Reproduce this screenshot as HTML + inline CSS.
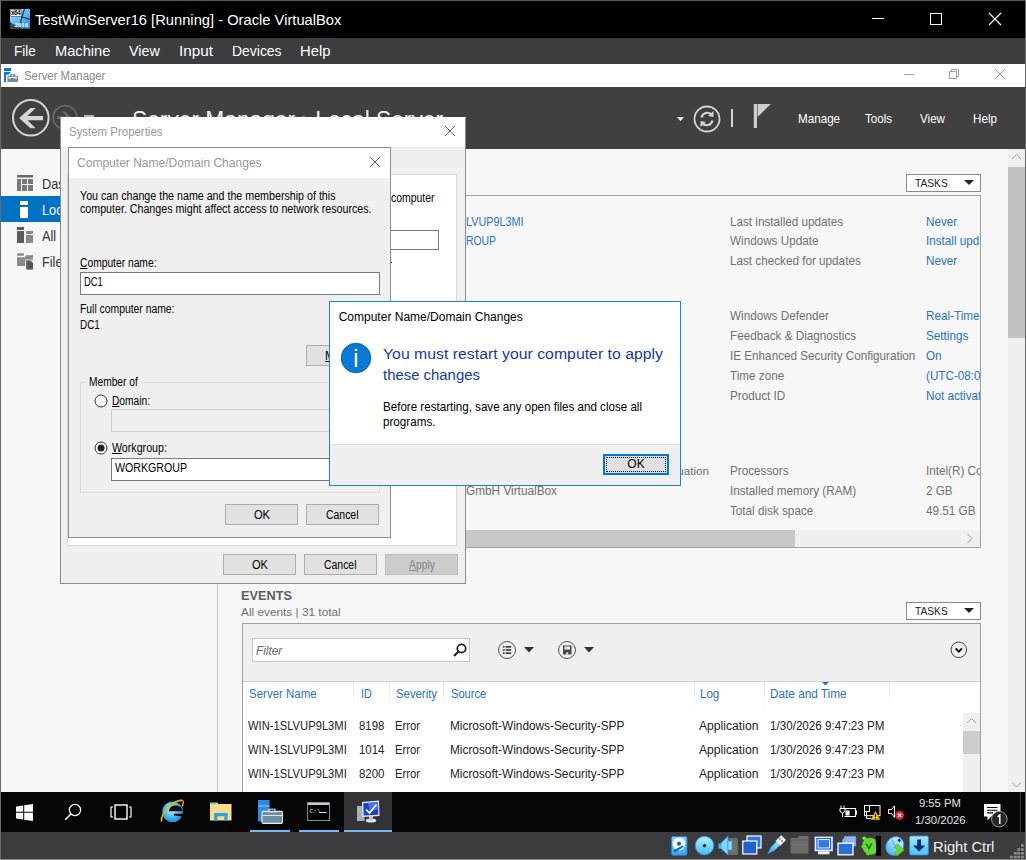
<!DOCTYPE html>
<html><head><meta charset="utf-8"><style>
html,body{margin:0;padding:0;width:1026px;height:860px;overflow:hidden;background:#3c3c3c}
body{position:relative;font-family:"Liberation Sans",sans-serif}
body>div{position:absolute}
.t{position:absolute;white-space:nowrap;font-family:"Liberation Sans",sans-serif}
svg{overflow:visible}
</style></head><body>
<div style="left:0px;top:0px;width:1026px;height:860px;background:#3c3c3c"></div>
<div style="left:0px;top:0px;width:1026px;height:1px;background:#5a5a5a"></div>
<div style="left:0px;top:0px;width:1px;height:860px;background:#6a6a6a"></div>
<div style="left:1025px;top:0px;width:1px;height:860px;background:#6a6a6a"></div>
<div style="left:1px;top:1px;width:1024px;height:37px;background:#000"></div>
<svg style="position:absolute;left:10px;top:9px;" width="20" height="20" viewBox="0 0 20 20"><defs><linearGradient id="g1" x1="0" y1="0" x2="1" y2="1"><stop offset="0" stop-color="#bfe8fb"/><stop offset="0.5" stop-color="#5bbcf4"/><stop offset="1" stop-color="#1f86e8"/></linearGradient></defs>
<rect width="20" height="20" fill="url(#g1)"/><polygon points="0,13 0,20 11,20" fill="#3e4654"/><polygon points="0,18 0,20 20,20 20,19" fill="#3e4654" opacity="0.6"/>
<path d="M14.5,0 Q11,9 9.5,20" stroke="#1d2d44" stroke-width="1.1" fill="none"/><line x1="11" y1="7.5" x2="20" y2="10.5" stroke="#1d2d44" stroke-width="1.1"/>
<rect x="0.3" y="0.5" width="11" height="7" rx="1" fill="#f2efe6" stroke="#444" stroke-width="0.6"/><text x="1" y="6.3" font-size="6.4" font-family="Liberation Sans" font-weight="bold" fill="#1a1a1a" textLength="9.6">x64</text>
<text x="4.6" y="17.6" font-size="6.6" font-family="Liberation Serif" font-weight="bold" fill="#fff" textLength="13.6">2016</text></svg>
<div class="t" style="left:34.9px;top:11.88px;font-size:15.5px;line-height:15.5px;color:#fff;;transform:scaleX(0.9492);transform-origin:0 0;">TestWinServer16 [Running] - Oracle VirtualBox</div>
<div style="left:872px;top:18px;width:12px;height:1px;background:#fff"></div>
<div style="left:930px;top:13px;width:12px;height:12px;border:1px solid #fff;box-sizing:border-box"></div>
<svg style="position:absolute;left:988px;top:12px;" width="14" height="14" viewBox="0 0 14 14"><path d="M1,1 L13,13 M13,1 L1,13" stroke="#fff" stroke-width="1.2"/></svg>
<div style="left:1px;top:38px;width:1024px;height:26px;background:#3c3d3f"></div>
<div class="t" style="left:14.1px;top:43.30px;font-size:15px;line-height:15px;color:#fff;;transform:scaleX(0.9019);transform-origin:0 0;">File</div>
<div class="t" style="left:54.7px;top:43.30px;font-size:15px;line-height:15px;color:#fff;;transform:scaleX(0.9753);transform-origin:0 0;">Machine</div>
<div class="t" style="left:129.2px;top:43.30px;font-size:15px;line-height:15px;color:#fff;;transform:scaleX(0.9550);transform-origin:0 0;">View</div>
<div class="t" style="left:178.9px;top:43.30px;font-size:15px;line-height:15px;color:#fff;;transform:scaleX(1.0217);transform-origin:0 0;">Input</div>
<div class="t" style="left:232px;top:43.30px;font-size:15px;line-height:15px;color:#fff;;transform:scaleX(0.9295);transform-origin:0 0;">Devices</div>
<div class="t" style="left:299.9px;top:43.30px;font-size:15px;line-height:15px;color:#fff;;transform:scaleX(0.9884);transform-origin:0 0;">Help</div>
<div style="left:1px;top:64px;width:1024px;height:23px;background:#fff"></div>
<svg style="position:absolute;left:4px;top:68px;" width="15" height="15" viewBox="0 0 15 15"><rect x="0" y="0" width="7" height="3" fill="#0a78d4"/><path d="M0,4 H7 L4.2,6.8 H2 V14 H0 Z" fill="#0a78d4"/><rect x="3.4" y="7.8" width="10.6" height="6.2" fill="#6e8ca2"/><rect x="6.6" y="6.3" width="4.2" height="2" fill="none" stroke="#6e8ca2" stroke-width="1"/><path d="M4.2,9 H13.2 L12.4,10.8 H11.4 L11,9.9 H6.4 L6,10.8 H5 Z" fill="#fff"/></svg>
<div class="t" style="left:24.4px;top:70.02px;font-size:12.5px;line-height:12.5px;color:#8a8a8a;;transform:scaleX(0.9082);transform-origin:0 0;">Server Manager</div>
<div style="left:904px;top:74px;width:10px;height:1px;background:#a0a0a0"></div>
<svg style="position:absolute;left:948px;top:68px;" width="12" height="12" viewBox="0 0 12 12"><rect x="1.5" y="3.5" width="7" height="7" fill="none" stroke="#a0a0a0"/><path d="M3.5,3.5 V1.5 H10.5 V8.5 H8.5" fill="none" stroke="#a0a0a0"/></svg>
<svg style="position:absolute;left:995px;top:69px;" width="11" height="11" viewBox="0 0 11 11"><path d="M0,0 L10,10 M10,0 L0,10" stroke="#a0a0a0" stroke-width="1"/></svg>
<div style="left:1px;top:87px;width:1024px;height:62px;background:#404040"></div>
<svg style="position:absolute;left:11px;top:98px;" width="40" height="40" viewBox="0 0 40 40"><circle cx="19.8" cy="19.8" r="17.8" fill="none" stroke="#d6d6d6" stroke-width="2"/><polygon points="8.1,20.1 19.5,9.9 24.7,9.9 16.4,17.9 32,17.9 32,22.3 16.4,22.3 24.7,30.2 19.5,30.2" fill="#d6d6d6"/></svg>
<svg style="position:absolute;left:51px;top:104px;" width="28" height="28" viewBox="0 0 28 28"><circle cx="14" cy="13.5" r="11.8" fill="none" stroke="#6a6a6a" stroke-width="1.6"/><polygon points="21,13.7 14,7.5 10.5,7.5 15.5,12.2 6,12.2 6,15.2 15.5,15.2 10.5,19.9 14,19.9" fill="#6a6a6a"/></svg>
<div style="left:84px;top:115px;width:10px;height:2px;background:#b8b8b8"></div>
<div class="t" style="left:132px;top:108.53px;font-size:23px;line-height:23px;color:#f0f0f0;;transform:scaleX(0.9890);transform-origin:0 0;">Server Manager &#8250; Local Server</div>
<svg style="position:absolute;left:676px;top:116.5px;" width="10" height="6" viewBox="0 0 10 6"><polygon points="1,0 8,0 4.5,4.2" fill="#f0f0f0"/></svg>
<svg style="position:absolute;left:693px;top:105px;" width="28" height="28" viewBox="0 0 28 28"><circle cx="14" cy="14" r="12.5" fill="none" stroke="#d4d4d4" stroke-width="1.8"/><path d="M8.5,12.5 A6,6 0 0 1 19,10 M19.5,15.5 A6,6 0 0 1 9,18" fill="none" stroke="#d4d4d4" stroke-width="2.2"/><polygon points="20.5,6 20.5,12 15,11" fill="#d4d4d4"/><polygon points="7.5,22 7.5,16 13,17" fill="#d4d4d4"/></svg>
<div style="left:731px;top:109px;width:2px;height:18px;background:#d4d4d4"></div>
<svg style="position:absolute;left:753px;top:103px;" width="19" height="26" viewBox="0 0 19 26"><rect x="0.8" y="1" width="3.2" height="24" fill="#cfcfcf"/><polygon points="4.6,1 17.8,1 4.6,14" fill="#cfcfcf"/></svg>
<div class="t" style="left:797.5px;top:112.96px;font-size:12.8px;line-height:12.8px;color:#fff;;transform:scaleX(0.9100);transform-origin:0 0;">Manage</div>
<div class="t" style="left:865px;top:112.96px;font-size:12.8px;line-height:12.8px;color:#fff;;transform:scaleX(0.9100);transform-origin:0 0;">Tools</div>
<div class="t" style="left:919.6px;top:112.96px;font-size:12.8px;line-height:12.8px;color:#fff;;transform:scaleX(0.9100);transform-origin:0 0;">View</div>
<div class="t" style="left:973px;top:112.96px;font-size:12.8px;line-height:12.8px;color:#fff;;transform:scaleX(0.9100);transform-origin:0 0;">Help</div>
<div style="left:1px;top:149px;width:216px;height:643px;background:#f7f7f7"></div>
<div style="left:217px;top:149px;width:1px;height:643px;background:#c8c8c8"></div>
<div style="left:1px;top:196px;width:216px;height:26px;background:#0072c6"></div>
<svg style="position:absolute;left:17px;top:175px;" width="16" height="16" viewBox="0 0 16 16"><rect x="0" y="0" width="16" height="2.5" fill="#6a6a6a"/><rect x="0" y="4" width="4" height="12" fill="#7a7a7a"/><rect x="5" y="4" width="5" height="5" fill="#7a7a7a"/><rect x="11" y="4" width="5" height="5" fill="#7a7a7a"/><rect x="5" y="10" width="5" height="6" fill="#7a7a7a"/><rect x="11" y="10" width="5" height="6" fill="#7a7a7a"/></svg>
<div class="t" style="left:41.5px;top:177.15px;font-size:14px;line-height:14px;color:#333;;transform:scaleX(0.9100);transform-origin:0 0;">Dashboard</div>
<svg style="position:absolute;left:20px;top:201px;" width="9" height="17" viewBox="0 0 9 17"><rect x="0" y="0" width="8" height="4" fill="#fff"/><rect x="0" y="6" width="8" height="11" fill="#fff"/></svg>
<div class="t" style="left:41.5px;top:203.15px;font-size:14px;line-height:14px;color:#fff;;transform:scaleX(0.9100);transform-origin:0 0;">Local Server</div>
<svg style="position:absolute;left:17px;top:227px;" width="16" height="17" viewBox="0 0 16 17"><rect x="0" y="0" width="7" height="3" fill="#5a5a5a"/><rect x="0" y="4" width="7" height="12" fill="#5a5a5a"/><rect x="9" y="4" width="7" height="3" fill="#888"/><rect x="9" y="8" width="7" height="8" fill="#888"/></svg>
<div class="t" style="left:41.5px;top:229.15px;font-size:14px;line-height:14px;color:#333;;transform:scaleX(0.9100);transform-origin:0 0;">All Servers</div>
<svg style="position:absolute;left:17px;top:253px;" width="17" height="18" viewBox="0 0 17 18"><rect x="0" y="0.2" width="7" height="2.5" rx="0.8" fill="#8a8a8a"/><polygon points="0,4.2 7.8,4.2 9,2.3 16,2.3 16,7.8 8.6,7.8 8.6,13 0,13" fill="#8a8a8a"/><rect x="8.4" y="6.6" width="8.4" height="10.6" fill="#f7f7f7"/><rect x="9.2" y="7.4" width="6.8" height="9.2" fill="#555"/><polygon points="13.4,7.4 16,7.4 16,10" fill="#f7f7f7"/></svg>
<div class="t" style="left:41.5px;top:255.15px;font-size:14px;line-height:14px;color:#333;;transform:scaleX(0.9100);transform-origin:0 0;">File and Storage Services</div>
<div style="left:218px;top:149px;width:790px;height:643px;background:#f7f7f7"></div>
<div style="left:1008px;top:149px;width:17px;height:643px;background:#f0f0f0"></div>
<div style="left:1008px;top:167px;width:17px;height:171px;background:#c2c2c2"></div>
<svg style="position:absolute;left:1011px;top:153px;" width="11" height="8" viewBox="0 0 11 8"><path d="M1,6 L5.5,1.5 L10,6" fill="none" stroke="#a0a0a0" stroke-width="1"/></svg>
<svg style="position:absolute;left:1011px;top:781px;" width="11" height="8" viewBox="0 0 11 8"><path d="M1,1.5 L5.5,6 L10,1.5" fill="none" stroke="#a0a0a0" stroke-width="1"/></svg>
<div style="left:242px;top:195px;width:739px;height:353px;border:1px solid #a0a0a0;box-sizing:border-box;background:#f7f7f7"></div>
<div style="left:906px;top:174px;width:75px;height:18px;border:1px solid #8a8a8a;box-sizing:border-box;background:#fff"></div>
<div class="t" style="left:915.3px;top:177.91px;font-size:11.8px;line-height:11.8px;color:#222;;transform:scaleX(0.8648);transform-origin:0 0;">TASKS</div>
<svg style="position:absolute;left:964px;top:180px;" width="11" height="6" viewBox="0 0 11 6"><polygon points="0,0 10,0 5,5" fill="#222"/></svg>
<div class="t" style="left:466px;top:215.84px;font-size:12px;line-height:12px;color:#2a72c0;;transform:scaleX(0.9011);transform-origin:0 0;">LVUP9L3MI</div>
<div class="t" style="left:466px;top:234.84px;font-size:12px;line-height:12px;color:#2a72c0;;transform:scaleX(0.8653);transform-origin:0 0;">ROUP</div>
<div class="t" style="left:466px;top:485.34px;font-size:12px;line-height:12px;color:#707070;;transform:scaleX(0.9839);transform-origin:0 0;">GmbH VirtualBox</div>
<div class="t" style="right:316.9px;top:465.10px;font-size:11.7px;line-height:11.7px;color:#707070">Standard Evaluation</div>
<div class="t" style="left:730.3px;top:215.67px;font-size:12.2px;line-height:12.2px;color:#707070;;transform:scaleX(0.9600);transform-origin:0 0;">Last installed updates</div>
<div style="left:925.6px;top:211px;width:54.4px;height:20px;overflow:hidden"><div class="t" style="left:0;top:4.67px;font-size:12.2px;line-height:12.2px;color:#2a72c0;transform:scaleX(0.96);transform-origin:0 0">Never</div></div>
<div class="t" style="left:730.3px;top:234.67px;font-size:12.2px;line-height:12.2px;color:#707070;;transform:scaleX(0.9600);transform-origin:0 0;">Windows Update</div>
<div style="left:925.6px;top:230px;width:54.4px;height:20px;overflow:hidden"><div class="t" style="left:0;top:4.67px;font-size:12.2px;line-height:12.2px;color:#2a72c0;transform:scaleX(0.96);transform-origin:0 0">Install updates</div></div>
<div class="t" style="left:730.3px;top:254.67px;font-size:12.2px;line-height:12.2px;color:#707070;;transform:scaleX(0.9600);transform-origin:0 0;">Last checked for updates</div>
<div style="left:925.6px;top:250px;width:54.4px;height:20px;overflow:hidden"><div class="t" style="left:0;top:4.67px;font-size:12.2px;line-height:12.2px;color:#2a72c0;transform:scaleX(0.96);transform-origin:0 0">Never</div></div>
<div class="t" style="left:730.3px;top:309.67px;font-size:12.2px;line-height:12.2px;color:#707070;;transform:scaleX(0.9600);transform-origin:0 0;">Windows Defender</div>
<div style="left:925.6px;top:305px;width:54.4px;height:20px;overflow:hidden"><div class="t" style="left:0;top:4.67px;font-size:12.2px;line-height:12.2px;color:#2a72c0;transform:scaleX(0.96);transform-origin:0 0">Real-Time Protection</div></div>
<div class="t" style="left:730.3px;top:329.67px;font-size:12.2px;line-height:12.2px;color:#707070;;transform:scaleX(0.9600);transform-origin:0 0;">Feedback &amp; Diagnostics</div>
<div style="left:925.6px;top:325px;width:54.4px;height:20px;overflow:hidden"><div class="t" style="left:0;top:4.67px;font-size:12.2px;line-height:12.2px;color:#2a72c0;transform:scaleX(0.96);transform-origin:0 0">Settings</div></div>
<div class="t" style="left:730.3px;top:349.67px;font-size:12.2px;line-height:12.2px;color:#707070;;transform:scaleX(0.9600);transform-origin:0 0;">IE Enhanced Security Configuration</div>
<div style="left:925.6px;top:345px;width:54.4px;height:20px;overflow:hidden"><div class="t" style="left:0;top:4.67px;font-size:12.2px;line-height:12.2px;color:#2a72c0;transform:scaleX(0.96);transform-origin:0 0">On</div></div>
<div class="t" style="left:730.3px;top:369.67px;font-size:12.2px;line-height:12.2px;color:#707070;;transform:scaleX(0.9600);transform-origin:0 0;">Time zone</div>
<div style="left:925.6px;top:365px;width:54.4px;height:20px;overflow:hidden"><div class="t" style="left:0;top:4.67px;font-size:12.2px;line-height:12.2px;color:#2a72c0;transform:scaleX(0.96);transform-origin:0 0">(UTC-08:00) Pacific</div></div>
<div class="t" style="left:730.3px;top:389.67px;font-size:12.2px;line-height:12.2px;color:#707070;;transform:scaleX(0.9600);transform-origin:0 0;">Product ID</div>
<div style="left:925.6px;top:385px;width:54.4px;height:20px;overflow:hidden"><div class="t" style="left:0;top:4.67px;font-size:12.2px;line-height:12.2px;color:#2a72c0;transform:scaleX(0.96);transform-origin:0 0">Not activated</div></div>
<div class="t" style="left:730.3px;top:464.67px;font-size:12.2px;line-height:12.2px;color:#707070;;transform:scaleX(0.9600);transform-origin:0 0;">Processors</div>
<div style="left:925.6px;top:460px;width:54.4px;height:20px;overflow:hidden"><div class="t" style="left:0;top:4.67px;font-size:12.2px;line-height:12.2px;color:#707070;transform:scaleX(0.96);transform-origin:0 0">Intel(R) Core</div></div>
<div class="t" style="left:730.3px;top:484.67px;font-size:12.2px;line-height:12.2px;color:#707070;;transform:scaleX(0.9600);transform-origin:0 0;">Installed memory (RAM)</div>
<div style="left:925.6px;top:480px;width:54.4px;height:20px;overflow:hidden"><div class="t" style="left:0;top:4.67px;font-size:12.2px;line-height:12.2px;color:#707070;transform:scaleX(0.96);transform-origin:0 0">2 GB</div></div>
<div class="t" style="left:730.3px;top:504.67px;font-size:12.2px;line-height:12.2px;color:#707070;;transform:scaleX(0.9600);transform-origin:0 0;">Total disk space</div>
<div style="left:925.6px;top:500px;width:54.4px;height:20px;overflow:hidden"><div class="t" style="left:0;top:4.67px;font-size:12.2px;line-height:12.2px;color:#707070;transform:scaleX(0.96);transform-origin:0 0">49.51 GB</div></div>
<div style="left:242px;top:530px;width:738px;height:17px;background:#f0f0f0"></div>
<div style="left:242px;top:530px;width:553px;height:17px;background:#c8c8c8"></div>
<svg style="position:absolute;left:966px;top:533px;" width="8" height="11" viewBox="0 0 8 11"><path d="M1.5,1 L6,5.5 L1.5,10" fill="none" stroke="#999" stroke-width="1"/></svg>
<div style="left:906px;top:602px;width:75px;height:18px;border:1px solid #8a8a8a;box-sizing:border-box;background:#fff"></div>
<div class="t" style="left:915.3px;top:605.91px;font-size:11.8px;line-height:11.8px;color:#222;;transform:scaleX(0.8648);transform-origin:0 0;">TASKS</div>
<svg style="position:absolute;left:964px;top:608px;" width="11" height="6" viewBox="0 0 11 6"><polygon points="0,0 10,0 5,5" fill="#222"/></svg>
<div class="t" style="left:241.4px;top:589.00px;font-size:13.7px;line-height:13.7px;color:#606060;font-weight:bold;transform:scaleX(0.9294);transform-origin:0 0;">EVENTS</div>
<div class="t" style="left:241.4px;top:607.01px;font-size:11.8px;line-height:11.8px;color:#707070;;transform:scaleX(1.0023);transform-origin:0 0;">All events | 31 total</div>
<div style="left:242px;top:623px;width:739px;height:169px;border:1px solid #a0a0a0;border-bottom:none;box-sizing:border-box;background:#fff"></div>
<div style="left:243px;top:624px;width:737px;height:57px;background:#f0f0f0"></div>
<div style="left:243px;top:681px;width:737px;height:1px;background:#d0d0d0"></div>
<div style="left:252px;top:638px;width:218px;height:24px;border:1px solid #c8c8c8;box-sizing:border-box;background:#fff"></div>
<div class="t" style="left:256.2px;top:645.04px;font-size:12px;line-height:12px;color:#6a6a6a;font-style:italic;transform:scaleX(0.9861);transform-origin:0 0;">Filter</div>
<svg style="position:absolute;left:452px;top:642px;" width="16" height="16" viewBox="0 0 16 16"><circle cx="9.5" cy="6.5" r="4.2" fill="none" stroke="#222" stroke-width="1.8"/><path d="M6.5,9.5 L2,14" stroke="#222" stroke-width="2.2"/></svg>
<svg style="position:absolute;left:497px;top:640px;" width="20" height="20" viewBox="0 0 20 20"><circle cx="10" cy="10" r="8.5" fill="none" stroke="#555" stroke-width="1"/><rect x="6" y="6" width="1.6" height="1.6" fill="#333"/><rect x="6" y="9.2" width="1.6" height="1.6" fill="#333"/><rect x="6" y="12.4" width="1.6" height="1.6" fill="#333"/><rect x="8.6" y="6" width="5.6" height="1.6" fill="#333"/><rect x="8.6" y="9.2" width="5.6" height="1.6" fill="#333"/><rect x="8.6" y="12.4" width="5.6" height="1.6" fill="#333"/></svg>
<svg style="position:absolute;left:524px;top:647px;" width="11" height="6" viewBox="0 0 11 6"><polygon points="0,0 10,0 5,5.5" fill="#333"/></svg>
<svg style="position:absolute;left:557px;top:640px;" width="20" height="20" viewBox="0 0 20 20"><circle cx="10" cy="10" r="8.5" fill="none" stroke="#555" stroke-width="1"/><rect x="6" y="5.5" width="8.5" height="9" fill="#4a4a4a"/><rect x="7.5" y="6.5" width="5.5" height="3" fill="#f0f0f0"/><rect x="9.2" y="12.5" width="2" height="2" fill="#f0f0f0"/></svg>
<svg style="position:absolute;left:584px;top:647px;" width="11" height="6" viewBox="0 0 11 6"><polygon points="0,0 10,0 5,5.5" fill="#333"/></svg>
<svg style="position:absolute;left:950px;top:641px;" width="18" height="18" viewBox="0 0 18 18"><circle cx="8.8" cy="8.8" r="7.8" fill="none" stroke="#444" stroke-width="1"/><path d="M5.6,7.4 L8.8,10.6 L12,7.4" fill="none" stroke="#111" stroke-width="1.9"/></svg>
<div style="left:353px;top:682px;width:1px;height:30px;background:linear-gradient(#e6e6e6,#fff)"></div>
<div style="left:389px;top:682px;width:1px;height:30px;background:linear-gradient(#e6e6e6,#fff)"></div>
<div style="left:443px;top:682px;width:1px;height:30px;background:linear-gradient(#e6e6e6,#fff)"></div>
<div style="left:693.5px;top:682px;width:1px;height:30px;background:linear-gradient(#e6e6e6,#fff)"></div>
<div style="left:763.6px;top:682px;width:1px;height:30px;background:linear-gradient(#e6e6e6,#fff)"></div>
<div style="left:889px;top:682px;width:1px;height:30px;background:linear-gradient(#e6e6e6,#fff)"></div>
<div class="t" style="left:249.4px;top:687.59px;font-size:12.3px;line-height:12.3px;color:#2a72c0;;transform:scaleX(0.9346);transform-origin:0 0;">Server Name</div>
<div class="t" style="left:360.5px;top:687.59px;font-size:12.3px;line-height:12.3px;color:#2a72c0;;transform:scaleX(0.8690);transform-origin:0 0;">ID</div>
<div class="t" style="left:396px;top:687.59px;font-size:12.3px;line-height:12.3px;color:#2a72c0;;transform:scaleX(0.9230);transform-origin:0 0;">Severity</div>
<div class="t" style="left:451px;top:687.59px;font-size:12.3px;line-height:12.3px;color:#2a72c0;;transform:scaleX(0.9033);transform-origin:0 0;">Source</div>
<div class="t" style="left:700.2px;top:687.59px;font-size:12.3px;line-height:12.3px;color:#2a72c0;;transform:scaleX(0.9400);transform-origin:0 0;">Log</div>
<div class="t" style="left:770.4px;top:687.59px;font-size:12.3px;line-height:12.3px;color:#2a72c0;;transform:scaleX(0.9577);transform-origin:0 0;">Date and Time</div>
<svg style="position:absolute;left:822px;top:682px;" width="8" height="5" viewBox="0 0 8 5"><polygon points="0,0 7,0 3.5,3.5" fill="#2a72c0"/></svg>
<div class="t" style="left:248.4px;top:719.59px;font-size:12.3px;line-height:12.3px;color:#222;;transform:scaleX(0.9111);transform-origin:0 0;">WIN-1SLVUP9L3MI</div>
<div class="t" style="left:359px;top:719.59px;font-size:12.3px;line-height:12.3px;color:#222;;transform:scaleX(0.9320);transform-origin:0 0;">8198</div>
<div class="t" style="left:395.2px;top:719.59px;font-size:12.3px;line-height:12.3px;color:#222;;transform:scaleX(0.9111);transform-origin:0 0;">Error</div>
<div class="t" style="left:449.8px;top:719.59px;font-size:12.3px;line-height:12.3px;color:#222;;transform:scaleX(0.9631);transform-origin:0 0;">Microsoft-Windows-Security-SPP</div>
<div class="t" style="left:698.8px;top:719.59px;font-size:12.3px;line-height:12.3px;color:#222;;transform:scaleX(0.9872);transform-origin:0 0;">Application</div>
<div class="t" style="left:770px;top:719.59px;font-size:12.3px;line-height:12.3px;color:#222;;transform:scaleX(0.9462);transform-origin:0 0;">1/30/2026 9:47:23 PM</div>
<div class="t" style="left:248.4px;top:743.59px;font-size:12.3px;line-height:12.3px;color:#222;;transform:scaleX(0.9111);transform-origin:0 0;">WIN-1SLVUP9L3MI</div>
<div class="t" style="left:359px;top:743.59px;font-size:12.3px;line-height:12.3px;color:#222;;transform:scaleX(0.9320);transform-origin:0 0;">1014</div>
<div class="t" style="left:395.2px;top:743.59px;font-size:12.3px;line-height:12.3px;color:#222;;transform:scaleX(0.9111);transform-origin:0 0;">Error</div>
<div class="t" style="left:449.8px;top:743.59px;font-size:12.3px;line-height:12.3px;color:#222;;transform:scaleX(0.9631);transform-origin:0 0;">Microsoft-Windows-Security-SPP</div>
<div class="t" style="left:698.8px;top:743.59px;font-size:12.3px;line-height:12.3px;color:#222;;transform:scaleX(0.9872);transform-origin:0 0;">Application</div>
<div class="t" style="left:770px;top:743.59px;font-size:12.3px;line-height:12.3px;color:#222;;transform:scaleX(0.9462);transform-origin:0 0;">1/30/2026 9:47:23 PM</div>
<div class="t" style="left:248.4px;top:767.59px;font-size:12.3px;line-height:12.3px;color:#222;;transform:scaleX(0.9111);transform-origin:0 0;">WIN-1SLVUP9L3MI</div>
<div class="t" style="left:359px;top:767.59px;font-size:12.3px;line-height:12.3px;color:#222;;transform:scaleX(0.9320);transform-origin:0 0;">8200</div>
<div class="t" style="left:395.2px;top:767.59px;font-size:12.3px;line-height:12.3px;color:#222;;transform:scaleX(0.9111);transform-origin:0 0;">Error</div>
<div class="t" style="left:449.8px;top:767.59px;font-size:12.3px;line-height:12.3px;color:#222;;transform:scaleX(0.9631);transform-origin:0 0;">Microsoft-Windows-Security-SPP</div>
<div class="t" style="left:698.8px;top:767.59px;font-size:12.3px;line-height:12.3px;color:#222;;transform:scaleX(0.9872);transform-origin:0 0;">Application</div>
<div class="t" style="left:770px;top:767.59px;font-size:12.3px;line-height:12.3px;color:#222;;transform:scaleX(0.9462);transform-origin:0 0;">1/30/2026 9:47:23 PM</div>
<div style="left:963px;top:713px;width:17px;height:79px;background:#f0f0f0"></div>
<div style="left:963px;top:731px;width:17px;height:23px;background:#cdcdcd"></div>
<svg style="position:absolute;left:966px;top:717px;" width="11" height="8" viewBox="0 0 11 8"><path d="M1,6 L5.5,1.5 L10,6" fill="none" stroke="#a0a0a0" stroke-width="1"/></svg>
<div style="left:60px;top:117px;width:406px;height:467px;background:#f0f0f0;border:1px solid #8c8c8c;border-top-color:#fff;box-sizing:border-box"></div>
<div style="left:61px;top:118px;width:404px;height:29px;background:#fff"></div>
<div class="t" style="left:69.1px;top:125.70px;font-size:12.4px;line-height:12.4px;color:#999;;transform:scaleX(0.9236);transform-origin:0 0;">System Properties</div>
<svg style="position:absolute;left:445px;top:126px;" width="11" height="11" viewBox="0 0 11 11"><path d="M0,0 L10,10 M10,0 L0,10" stroke="#666" stroke-width="1"/></svg>
<div style="left:67px;top:174px;width:390px;height:372px;background:#fff;border:1px solid #d9d9d9;box-sizing:border-box"></div>
<div class="t" style="left:390.5px;top:191.84px;font-size:12px;line-height:12px;color:#000;;transform:scaleX(0.8695);transform-origin:0 0;">computer</div>
<div style="left:380px;top:230px;width:59px;height:20px;background:#fff;border:1px solid #7a7a7a;box-sizing:border-box"></div>
<div style="left:390px;top:262px;width:2px;height:1px;background:#000060"></div>
<div style="left:223px;top:554px;width:73px;height:21px;background:#e1e1e1;border:1px solid #adadad;box-sizing:border-box"></div>
<div class="t" style="left:251.5px;top:558.84px;font-size:12px;line-height:12px;color:#000;;transform:scaleX(0.9225);transform-origin:0 0;">OK</div>
<div style="left:304px;top:554px;width:73px;height:21px;background:#e1e1e1;border:1px solid #adadad;box-sizing:border-box"></div>
<div class="t" style="left:324.25px;top:558.84px;font-size:12px;line-height:12px;color:#000;;transform:scaleX(0.8699);transform-origin:0 0;">Cancel</div>
<div style="left:385px;top:554px;width:73px;height:21px;background:#cccccc;border:1px solid #bfbfbf;box-sizing:border-box"></div>
<div class="t" style="left:408.55px;top:558.84px;font-size:12px;line-height:12px;color:#838383;;transform:scaleX(0.8624);transform-origin:0 0;"><u>A</u>pply</div>
<div style="left:68px;top:147px;width:323px;height:391px;background:#f0f0f0;border:1px solid #8c8c8c;box-sizing:border-box"></div>
<div style="left:69px;top:148px;width:321px;height:30px;background:#fff"></div>
<div class="t" style="left:77.3px;top:157.10px;font-size:12.4px;line-height:12.4px;color:#999;;transform:scaleX(0.9712);transform-origin:0 0;">Computer Name/Domain Changes</div>
<svg style="position:absolute;left:370px;top:157px;" width="11" height="11" viewBox="0 0 11 11"><path d="M0,0 L10,10 M10,0 L0,10" stroke="#666" stroke-width="1"/></svg>
<div class="t" style="left:80.2px;top:189.84px;font-size:12px;line-height:12px;color:#000;;transform:scaleX(0.8900);transform-origin:0 0;">You can change the name and the membership of this</div>
<div class="t" style="left:80.2px;top:202.84px;font-size:12px;line-height:12px;color:#000;;transform:scaleX(0.8889);transform-origin:0 0;">computer. Changes might affect access to network resources.</div>
<div class="t" style="left:80.2px;top:256.84px;font-size:12px;line-height:12px;color:#000;;transform:scaleX(0.8558);transform-origin:0 0;"><u>C</u>omputer name:</div>
<div style="left:80px;top:272px;width:300px;height:23px;background:#fff;border:1px solid #7a7a7a;box-sizing:border-box"></div>
<div class="t" style="left:83.5px;top:275.84px;font-size:12px;line-height:12px;color:#000;;transform:scaleX(0.7787);transform-origin:0 0;">DC1</div>
<div class="t" style="left:80.2px;top:302.84px;font-size:12px;line-height:12px;color:#000;;transform:scaleX(0.8639);transform-origin:0 0;">Full computer name:</div>
<div class="t" style="left:80.2px;top:318.84px;font-size:12px;line-height:12px;color:#000;;transform:scaleX(0.8245);transform-origin:0 0;">DC1</div>
<div style="left:306px;top:345px;width:74px;height:21px;background:#e1e1e1;border:1px solid #adadad;box-sizing:border-box"></div>
<div class="t" style="left:325.0px;top:349.84px;font-size:12px;line-height:12px;color:#000;;transform:scaleX(0.9636);transform-origin:0 0;"><u>M</u>ore...</div>
<div style="left:80px;top:382px;width:300px;height:111px;border:1px solid #dcdcdc;box-sizing:border-box"></div>
<div style="left:87px;top:378px;width:53px;height:10px;background:#f0f0f0"></div>
<div class="t" style="left:89.4px;top:375.84px;font-size:12px;line-height:12px;color:#000;;transform:scaleX(0.8508);transform-origin:0 0;">Member of</div>
<svg style="position:absolute;left:94px;top:394px;" width="14" height="14" viewBox="0 0 14 14"><circle cx="7" cy="7" r="6" fill="#fff" stroke="#333" stroke-width="1"/></svg>
<div class="t" style="left:111.5px;top:394.84px;font-size:12px;line-height:12px;color:#000;;transform:scaleX(0.8501);transform-origin:0 0;"><u>D</u>omain:</div>
<div style="left:111px;top:409px;width:259px;height:23px;background:#f0f0f0;border:1px solid #cfcfcf;box-sizing:border-box"></div>
<svg style="position:absolute;left:94px;top:441px;" width="14" height="14" viewBox="0 0 14 14"><circle cx="7" cy="7" r="6" fill="#fff" stroke="#333" stroke-width="1"/><circle cx="7" cy="7" r="3.5" fill="#222"/></svg>
<div class="t" style="left:111.5px;top:441.84px;font-size:12px;line-height:12px;color:#000;;transform:scaleX(0.8882);transform-origin:0 0;"><u>W</u>orkgroup:</div>
<div style="left:111px;top:458px;width:259px;height:23px;background:#fff;border:1px solid #7a7a7a;box-sizing:border-box"></div>
<div class="t" style="left:114.5px;top:461.84px;font-size:12px;line-height:12px;color:#000;;transform:scaleX(0.8864);transform-origin:0 0;">WORKGROUP</div>
<div style="left:225px;top:504px;width:73px;height:21px;background:#e1e1e1;border:1px solid #adadad;box-sizing:border-box"></div>
<div class="t" style="left:253.5px;top:508.84px;font-size:12px;line-height:12px;color:#000;;transform:scaleX(0.9225);transform-origin:0 0;">OK</div>
<div style="left:306px;top:504px;width:73px;height:21px;background:#e1e1e1;border:1px solid #adadad;box-sizing:border-box"></div>
<div class="t" style="left:326.25px;top:508.84px;font-size:12px;line-height:12px;color:#000;;transform:scaleX(0.8699);transform-origin:0 0;">Cancel</div>
<div style="left:329px;top:301px;width:352px;height:185px;background:#fff;border:1px solid #1883d7;box-sizing:border-box;"></div>
<div style="left:330px;top:444px;width:350px;height:41px;background:#f0f0f0;border-top:1px solid #dfdfdf;box-sizing:border-box"></div>
<div class="t" style="left:338.7px;top:310.84px;font-size:12px;line-height:12px;color:#000;;">Computer Name/Domain Changes</div>
<svg style="position:absolute;left:340px;top:342px;" width="32" height="32" viewBox="0 0 32 32"><circle cx="16" cy="16" r="14.8" fill="#0a78d6" stroke="#0a5aa8" stroke-width="0.9"/><rect x="14.8" y="11" width="2.4" height="14" fill="#fff"/><rect x="14.8" y="6.9" width="2.4" height="2.1" fill="#fff"/></svg>
<div class="t" style="left:382.5px;top:345.96px;font-size:15.4px;line-height:15.4px;color:#173a9e;;transform:scaleX(1.0282);transform-origin:0 0;">You must restart your computer to apply</div>
<div class="t" style="left:382.5px;top:366.96px;font-size:15.4px;line-height:15.4px;color:#173a9e;;transform:scaleX(0.9678);transform-origin:0 0;">these changes</div>
<div class="t" style="left:382.5px;top:400.50px;font-size:12.4px;line-height:12.4px;color:#000;;transform:scaleX(0.9354);transform-origin:0 0;">Before restarting, save any open files and close all</div>
<div class="t" style="left:382.5px;top:415.50px;font-size:12.4px;line-height:12.4px;color:#000;;transform:scaleX(0.9412);transform-origin:0 0;">programs.</div>
<div style="left:603px;top:454px;width:66px;height:21px;background:#e1e1e1;border:2px solid #0078d7;box-sizing:border-box"></div>
<div style="left:606px;top:457px;width:60px;height:15px;border:1px dotted #000;box-sizing:border-box"></div>
<div class="t" style="left:603px;top:454px;width:66px;height:21px;line-height:21px;text-align:center;font-size:12px;color:#000">OK</div>
<div style="left:1px;top:792px;width:1024px;height:40px;background:#050508"></div>
<div style="left:1020px;top:792px;width:1px;height:40px;background:#3a3a3a"></div>
<svg style="position:absolute;left:16px;top:804px;" width="17" height="17" viewBox="0 0 17 17"><polygon points="0,2.4 7.2,1.4 7.2,7.8 0,7.8" fill="#fff"/><polygon points="8.2,1.2 17,0 17,7.8 8.2,7.8" fill="#fff"/><polygon points="0,8.8 7.2,8.8 7.2,15.6 0,14.6" fill="#fff"/><polygon points="8.2,8.8 17,8.8 17,17 8.2,15.8" fill="#fff"/></svg>
<svg style="position:absolute;left:64px;top:803px;" width="18" height="18" viewBox="0 0 18 18"><circle cx="11" cy="7" r="5.6" fill="none" stroke="#fff" stroke-width="1.3"/><path d="M7,11 L1.2,16.8" stroke="#fff" stroke-width="1.5"/></svg>
<svg style="position:absolute;left:110px;top:804px;" width="22" height="16" viewBox="0 0 22 16"><rect x="5" y="1" width="12" height="14" fill="none" stroke="#fff" stroke-width="1.4"/><path d="M3,3 H1 V13 H3 M19,3 H21 V13 H19" fill="none" stroke="#fff" stroke-width="1.2"/></svg>
<svg style="position:absolute;left:160px;top:799px;" width="24" height="25" viewBox="0 0 24 25"><defs><radialGradient id="ie" cx="0.45" cy="0.4" r="0.65"><stop offset="0" stop-color="#c8f4ff"/><stop offset="0.55" stop-color="#45bdf2"/><stop offset="1" stop-color="#1a7ccc"/></radialGradient></defs><circle cx="12.6" cy="12.8" r="10.4" fill="url(#ie)"/><path d="M8.8,12.2 Q9.5,6.5 15.6,6.5 Q21.8,6.5 22.3,12.2 Z" fill="#050508"/><polygon points="13.8,14.8 23.2,14.8 23.2,17.4 14,16.6" fill="#050508"/><path d="M1.6,22.6 A15.5,7.2 -45 0 1 22.6,1.6" fill="none" stroke="#f0b000" stroke-width="1.6"/><path d="M22.6,1.6 Q24,3 22.2,7.5" fill="none" stroke="#f0b000" stroke-width="1.4"/></svg>
<svg style="position:absolute;left:210px;top:802px;" width="22" height="19" viewBox="0 0 22 19"><rect x="0" y="0.5" width="8" height="3" rx="0.5" fill="#e9c46a"/><rect x="0" y="2" width="21.5" height="16.5" rx="0.5" fill="#f9dc8e"/><rect x="1" y="1" width="5" height="1.5" fill="#7fc7e8"/><path d="M5.8,18.6 V12.6 H16 V18.6" fill="none" stroke="#2aa2e8" stroke-width="3.3"/></svg>
<div style="left:250px;top:830px;width:40px;height:2px;background:#76b9ed"></div>
<svg style="position:absolute;left:257px;top:799px;" width="27" height="26" viewBox="0 0 27 26"><rect x="1" y="1" width="11.5" height="21.5" fill="#2a8be0"/><rect x="1" y="6.5" width="11.5" height="1" fill="#8fd0ff"/><rect x="5" y="12.4" width="20.5" height="12" rx="1.2" fill="#708ca2" stroke="#e8eef2" stroke-width="1.1"/><rect x="12" y="10.2" width="6" height="2.6" fill="none" stroke="#e8eef2" stroke-width="1"/><path d="M5.5,16.5 H25" stroke="#e8eef2" stroke-width="0.9"/></svg>
<div style="left:299px;top:830px;width:40px;height:2px;background:#76b9ed"></div>
<svg style="position:absolute;left:307px;top:802px;" width="23" height="19" viewBox="0 0 23 19"><rect x="0.5" y="0.5" width="22" height="18" fill="#000" stroke="#8a8a8a" stroke-width="1"/><rect x="1" y="1" width="21" height="2" fill="#c8c8c8"/><text x="2.6" y="10.5" font-size="6.2" font-family="Liberation Mono" fill="#e0e0e0">C:&#92;</text><path d="M12.5,10.5 H19.5" stroke="#e0e0e0" stroke-width="1"/></svg>
<div style="left:344px;top:792px;width:48px;height:40px;background:#333336"></div>
<div style="left:344px;top:830px;width:48px;height:2px;background:#76b9ed"></div>
<svg style="position:absolute;left:356px;top:800px;" width="25" height="24" viewBox="0 0 25 24"><rect x="1" y="6" width="7.5" height="15" fill="#a8aeb3"/><rect x="2" y="8" width="1.5" height="1.5" fill="#5f5"/><ellipse cx="15" cy="20.5" rx="5.2" ry="2" fill="#e2e5e8"/><rect x="13" y="16" width="4" height="4" fill="#b9bec3"/><polygon points="6,2 23,0.5 23.5,16 6.5,17" fill="#e8ecef"/><polygon points="7.3,3.2 22,2 22.3,14.7 7.6,15.6" fill="#1840c8"/><polygon points="12,3 22,2 22.3,9 14,12" fill="#5a8af0" opacity="0.7"/><path d="M10,9.5 L13.5,13 L20.5,4.5" fill="none" stroke="#fff" stroke-width="1.7"/></svg>
<svg style="position:absolute;left:839px;top:805px;" width="18" height="13" viewBox="0 0 18 13"><path d="M2,0.5 V3.5 M5,0.5 V3.5" stroke="#fff" stroke-width="1"/><path d="M1,3.5 H6 V6.5 Q3.5,9 1,6.5 Z" fill="none" stroke="#fff" stroke-width="1"/><path d="M3.5,8 V12" stroke="#fff" stroke-width="1"/><path d="M5.5,3.5 H16.5 V11.5 H5.5" fill="none" stroke="#fff" stroke-width="1.1"/><rect x="16.5" y="5.5" width="1.5" height="4" fill="#fff"/><rect x="6.5" y="5.5" width="4" height="5" fill="#fff"/></svg>
<svg style="position:absolute;left:864px;top:805px;" width="17" height="15" viewBox="0 0 17 15"><rect x="0.5" y="0.5" width="15.5" height="10.2" fill="none" stroke="#fff" stroke-width="1"/><rect x="0.5" y="0.5" width="5" height="6" fill="none" stroke="#fff" stroke-width="1"/><path d="M2.5,6.5 V13.5 H7" fill="none" stroke="#fff" stroke-width="1"/><polygon points="11.5,6 16.2,14.8 6.8,14.8" fill="#f4c20d"/><rect x="11" y="9" width="1.1" height="3" fill="#000"/><rect x="11" y="13" width="1.1" height="1" fill="#000"/></svg>
<svg style="position:absolute;left:887px;top:805px;" width="18" height="16" viewBox="0 0 18 16"><polygon points="1.5,4.5 4.5,4.5 7.5,0.8 7.5,12.5 4.5,8.5 1.5,8.5" fill="none" stroke="#fff" stroke-width="1"/><circle cx="12.6" cy="10.3" r="4.5" fill="#e81c2c"/><path d="M10.8,8.5 L14.4,12.1 M14.4,8.5 L10.8,12.1" stroke="#fff" stroke-width="1.1"/></svg>
<div class="t" style="left:918.9px;top:797.87px;font-size:11.5px;line-height:11.5px;color:#e6e6e6;;transform:scaleX(0.9760);transform-origin:0 0;">9:55 PM</div>
<div class="t" style="left:915px;top:815.27px;font-size:11.5px;line-height:11.5px;color:#e6e6e6;;transform:scaleX(0.9908);transform-origin:0 0;">1/30/2026</div>
<svg style="position:absolute;left:983px;top:803px;" width="27" height="26" viewBox="0 0 27 26"><path d="M1,1 H17.5 V13.5 H8 L4.5,17.5 V13.5 H1 Z" fill="#fff"/><path d="M4,4.5 H14.5 M4,7.2 H14.5 M4,9.9 H10" stroke="#050508" stroke-width="1.1"/><circle cx="16.3" cy="16.2" r="7.8" fill="#262626" stroke="#9a9a9a" stroke-width="1"/><path d="M14.6,13.8 L16.8,12 V21" fill="none" stroke="#fff" stroke-width="1.5"/></svg>
<div style="left:1px;top:832px;width:1024px;height:27px;background:#3c3c3e"></div>
<div style="left:0px;top:859px;width:1026px;height:1px;background:#8a8a8a"></div>
<svg style="position:absolute;left:670px;top:835px;" width="20" height="21" viewBox="0 0 20 21"><defs><linearGradient id="hd" x1="0" y1="0" x2="0" y2="1"><stop offset="0" stop-color="#8ad8fb"/><stop offset="1" stop-color="#3aa6f0"/></linearGradient></defs><rect x="1.4" y="1.4" width="15.6" height="18.8" rx="1.6" fill="url(#hd)" stroke="#1f7fdc" stroke-width="1"/><circle cx="9" cy="9" r="6.3" fill="#fff"/><circle cx="9" cy="8.7" r="2.1" fill="#1565d0"/><path d="M3.5,17 Q3,15.5 5,14.5 L12.5,10.5 Q14,10.3 13.5,12 L6,16.8 Q4,17.8 3.5,17 Z" fill="#1565d0"/></svg>
<svg style="position:absolute;left:694px;top:835px;" width="20" height="21" viewBox="0 0 20 21"><defs><linearGradient id="cd" x1="0" y1="0" x2="0" y2="1"><stop offset="0" stop-color="#b4eeff"/><stop offset="1" stop-color="#46bcf6"/></linearGradient></defs><circle cx="10.5" cy="10.6" r="9.3" fill="url(#cd)" stroke="#2a8fe0" stroke-width="0.9"/><circle cx="10.5" cy="10.6" r="1.7" fill="#1a1a1a"/></svg>
<svg style="position:absolute;left:718px;top:835px;" width="20" height="21" viewBox="0 0 20 21"><rect x="9.5" y="3" width="10.5" height="17" rx="1.5" fill="#6a6a6a"/><path d="M12,6 H18 M12,9 H18 M12,12 H18 M12,15 H18" stroke="#7c7c7c" stroke-width="1"/><rect x="0.8" y="8.5" width="2.5" height="5" fill="#5cc0f6" stroke="#2a8fe0" stroke-width="0.6"/><polygon points="3,8 10,1.2 10,20 3,13.5" fill="#7fd4fa" stroke="#2a8fe0" stroke-width="0.7"/><rect x="10" y="6" width="4" height="9" fill="#8fdcfc" stroke="#2a8fe0" stroke-width="0.7"/></svg>
<svg style="position:absolute;left:742px;top:835px;" width="20" height="21" viewBox="0 0 20 21"><rect x="5" y="1" width="14" height="12" fill="#2f78e0" stroke="#fff" stroke-width="1.2"/><rect x="0.8" y="6" width="14" height="13" fill="#1f62d0" stroke="#fff" stroke-width="1.2"/></svg>
<svg style="position:absolute;left:766px;top:835px;" width="20" height="21" viewBox="0 0 20 21"><defs><linearGradient id="usb" x1="0" y1="1" x2="1" y2="0"><stop offset="0" stop-color="#3aa8f0"/><stop offset="1" stop-color="#9ee2fc"/></linearGradient></defs><path d="M1.5,19 L3.5,15.5 Q4,13 6.5,10.5 L10.5,6.5 L14,10 L10,14 Q7.5,16.5 5,17 Z" fill="url(#usb)" stroke="#2a8fe0" stroke-width="0.6"/><rect x="11.5" y="1.5" width="6.5" height="8" transform="rotate(45 14.75 5.5)" fill="#f2f2f2" stroke="#bbb" stroke-width="0.5"/><rect x="13.2" y="3.2" width="1.4" height="1.4" fill="#555"/><rect x="15.4" y="5.4" width="1.4" height="1.4" fill="#555"/></svg>
<svg style="position:absolute;left:790px;top:835px;" width="20" height="21" viewBox="0 0 20 21"><path d="M0.5,3 H7 L9,1 H18.5 V18.5 H0.5 Z" fill="#6c6c6c"/><path d="M0.5,5 H18.5" stroke="#5e5e5e" stroke-width="1"/></svg>
<svg style="position:absolute;left:814px;top:835px;" width="20" height="21" viewBox="0 0 20 21"><rect x="0.5" y="1.3" width="18.5" height="15" fill="#f4f4f4" stroke="#1f62d0" stroke-width="0.6"/><rect x="2.3" y="3" width="14.9" height="11.6" fill="#1f62d0"/><rect x="4" y="4.6" width="11.5" height="8.4" fill="#2f78e0" stroke="#fff" stroke-width="0.9"/><rect x="4" y="16.3" width="11.5" height="3" fill="#f4f4f4"/></svg>
<svg style="position:absolute;left:837px;top:835px;" width="20" height="21" viewBox="0 0 20 21"><rect x="7" y="1.3" width="12" height="10" rx="1" fill="#8ab4f4" stroke="#5a8ae0" stroke-width="0.5"/><path d="M7,4 Q5,6 7,8" fill="none" stroke="#8ab4f4" stroke-width="1.5"/><rect x="1" y="8.2" width="15" height="11.6" fill="#2a6ed8" stroke="#fff" stroke-width="1.3"/></svg>
<svg style="position:absolute;left:860px;top:835px;" width="20" height="21" viewBox="0 0 20 21"><path d="M2,3 Q3,0.5 5.5,2 L7,3.5 Q10,2 14,3.5 Q16,5 16,9 L16,18 Q13,20.5 9,19.5 L8.5,20.5 L6.5,20 L6,18 Q3,16 2.5,13 L1,12 L2.5,9.5 Q2.5,7 4,5.5 Z" fill="#62d632"/><path d="M5.5,9 L9,15 L12.5,8.5 L11,8.2 L9,12 L7,8.8 Z" fill="#1f6a12"/><circle cx="4" cy="3" r="0.7" fill="#d8ffd0"/><rect x="16" y="1" width="5" height="19.6" fill="#000"/></svg>
<svg style="position:absolute;left:885px;top:835px;" width="20" height="21" viewBox="0 0 20 21"><defs><linearGradient id="ms" x1="0" y1="0" x2="0" y2="1"><stop offset="0" stop-color="#c8f2ff"/><stop offset="1" stop-color="#4cb8f4"/></linearGradient></defs><ellipse cx="9.8" cy="11" rx="8.6" ry="9.8" transform="rotate(35 9.8 11)" fill="url(#ms)" stroke="#2a8fe0" stroke-width="0.8"/><path d="M7.5,5 Q8,9 11,11" fill="none" stroke="#2a8fe0" stroke-width="0.7"/><rect x="13" y="4" width="2.6" height="2.6" transform="rotate(45 14.3 5.3)" fill="#0c2f7a"/><polygon points="9,12 12,9 19.5,15 12,21 9,18 13.5,15" fill="#6ad630" stroke="#3a9a18" stroke-width="0.5"/></svg>
<svg style="position:absolute;left:909px;top:835px;" width="20" height="21" viewBox="0 0 20 21"><defs><linearGradient id="kb" x1="0" y1="0" x2="0" y2="1"><stop offset="0" stop-color="#a8e6ff"/><stop offset="1" stop-color="#4cc0f8"/></linearGradient></defs><rect x="0.6" y="1" width="18.8" height="19" rx="1.4" fill="url(#kb)" stroke="#2a90e0" stroke-width="0.8"/><rect x="8.2" y="4.5" width="3.8" height="7" fill="#0c2a78"/><polygon points="4,10.5 16.2,10.5 10.1,16.5" fill="#0c2a78"/></svg>
<div class="t" style="left:932.9px;top:840.03px;font-size:14.5px;line-height:14.5px;color:#f2f2f2;;transform:scaleX(1.0159);transform-origin:0 0;">Right Ctrl</div>
<svg style="position:absolute;left:1008px;top:842px;" width="17" height="17" viewBox="0 0 17 17"><g fill="#8c8c8c"><rect x="13.0" y="2.2" width="2.8" height="2.6"/><rect x="9.3" y="6.2" width="2.8" height="2.6"/><rect x="13.0" y="6.2" width="2.8" height="2.6"/><rect x="5.9" y="10.0" width="2.8" height="2.6"/><rect x="9.3" y="10.0" width="2.8" height="2.6"/><rect x="13.0" y="10.0" width="2.8" height="2.6"/><rect x="2.0" y="13.8" width="2.8" height="2.6"/><rect x="5.9" y="13.8" width="2.8" height="2.6"/><rect x="9.3" y="13.8" width="2.8" height="2.6"/><rect x="13.0" y="13.8" width="2.8" height="2.6"/></g></svg>
</body></html>
